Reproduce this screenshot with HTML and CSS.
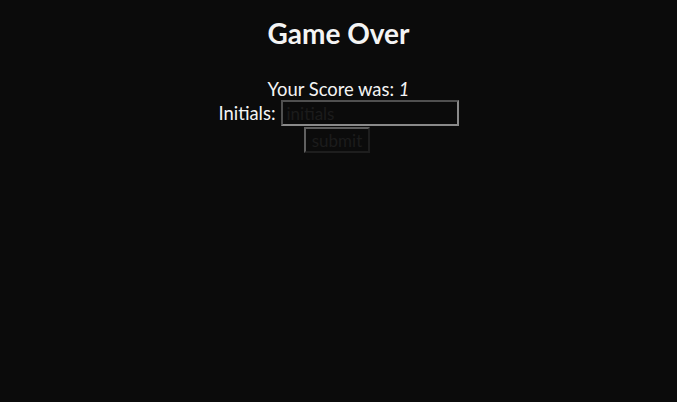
FILE: index.html
```html
<!DOCTYPE html>
<html>
<head>
<meta charset="utf-8">
<link rel="stylesheet" href="styles.css">
</head>
<body>
<div class="page">
  <h1 class="title">Game Over</h1>
  <p class="score">Your Score was: <em>1</em></p>
  <form class="form">
    <div class="row">
      <label class="label">Initials:</label>
      <input class="input" type="text" placeholder="initials">
    </div>
    <button class="btn" type="button">submit</button>
  </form>
</div>
</body>
</html>
```
FILE: styles.css
```css
html, body {
  margin: 0;
  padding: 0;
  background: #0b0b0b;
  height: 100%;
}
.page {
  font-family: Lato, "Open Sans", sans-serif;
  color: #f4f4f4;
  text-align: center;
  padding-top: 16px;
}
.title {
  margin: 0;
  font-size: 28px;
  font-weight: 700;
  line-height: 34px;
}
.score {
  margin: 28px 0 0;
  font-size: 18.4px;
  line-height: 22px;
}
.score em {
  font-style: italic;
}
.form {
  display: flex;
  flex-direction: column;
  align-items: center;
}
.row {
  display: flex;
  align-items: center;
  gap: 5px;
}
.label {
  font-size: 18.4px;
}
.input {
  width: 170px;
  height: 22px;
  box-sizing: content-box;
  padding: 0 0 0 4px;
  margin: 0;
  border: 2px solid;
  border-color: #505050 #8a8a8a #8a8a8a #505050;
  background: #0b0b0b;
  color: #222;
  font-family: Lato, sans-serif;
  font-size: 17px;
}
.input::placeholder {
  color: #1c1c1c;
}
.btn {
  margin: 1px 3px 0 0;
  width: 66px;
  height: 26px;
  border: 2px solid;
  border-color: #606060 #1e1e1e #1e1e1e #606060;
  background: #0b0b0b;
  color: #1c1c1c;
  font-family: Lato, sans-serif;
  font-size: 17px;
  padding: 0;
}
```
